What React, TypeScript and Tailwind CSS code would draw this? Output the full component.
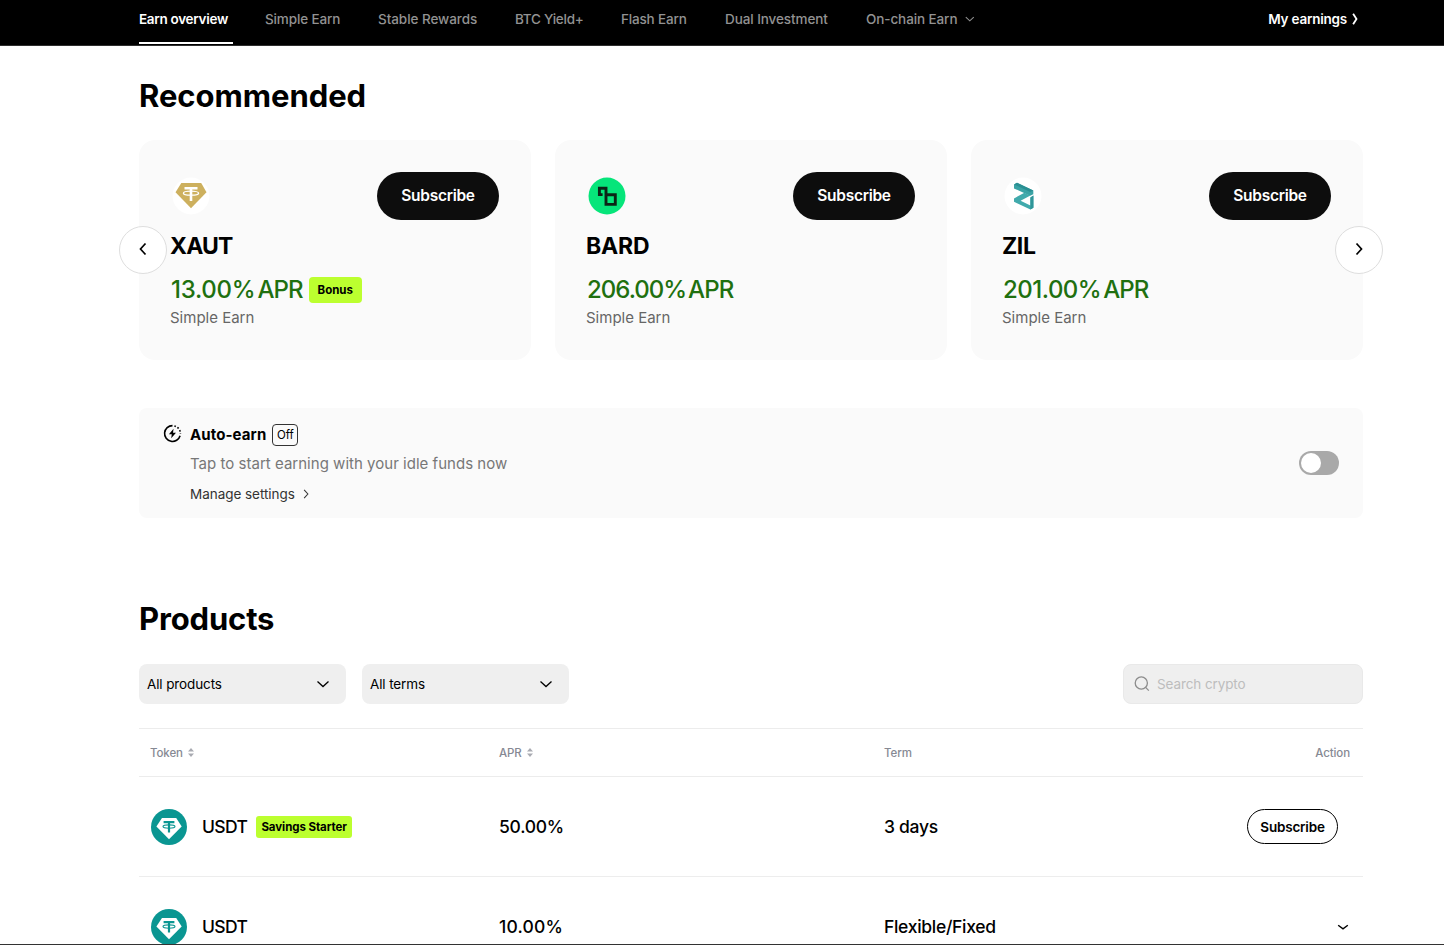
import { FunctionComponent, ReactNode } from "react";

interface NavItem {
  label: string;
  width: string;
  active?: boolean;
  dropdown?: boolean;
}

interface CardProps {
  name: string;
  apr: string;
  icon: ReactNode;
  nameClass: string;
  aprClass: string;
  bonus?: boolean;
}

interface RowProps {
  apr: string;
  aprClass: string;
  term: string;
  tag?: string;
  children: ReactNode;
}

const navItems: NavItem[] = [
  { label: "Earn overview", width: "w-[94px] tracking-[-0.3px]", active: true },
  { label: "Simple Earn", width: "w-[75px] tracking-[-0.13px]" },
  { label: "Stable Rewards", width: "w-[99px] tracking-[-0.06px]" },
  { label: "BTC Yield+", width: "w-[68px] tracking-[-0.27px]" },
  { label: "Flash Earn", width: "w-[66px] tracking-[-0.17px]" },
  { label: "Dual Investment", width: "w-[103px] tracking-[-0.08px]" },
  { label: "On-chain Earn", width: "w-[110px] tracking-[-0.1px]", dropdown: true },
];

const Chevron: FunctionComponent<{ d: string; className: string; stroke?: number }> = ({
  d,
  className,
  stroke = 1.5,
}) => (
  <svg className={className} viewBox="0 0 16 16" fill="none" stroke="currentColor" strokeWidth={stroke}>
    <path d={d} />
  </svg>
);

const DOWN = "M2.5 5.5 8 10.5l5.5-5";
const RIGHT = "M5.5 2.5 10.5 8l-5 5.5";
const LEFT = "M10.5 2.5 5.5 8l5 5.5";

const XautIcon = () => (
  <svg className="size-10" viewBox="0 0 40 40">
    <circle cx="20" cy="20" r="18.5" fill="#fff" />
    <path d="M10.3 7h19.9l5.3 9.2L20 32.2 4.5 16.2z" fill="#cdb05e" />
    <path d="M13.5 12.2h13M20 12v13" stroke="#fff" strokeWidth="2.6" fill="none" />
    <ellipse cx="20" cy="17.2" rx="7.6" ry="2" fill="none" stroke="#fff" strokeWidth="1.3" />
  </svg>
);

const BardIcon = () => (
  <svg className="size-10" viewBox="0 0 40 40">
    <circle cx="20" cy="20" r="18.5" fill="#06e57a" />
    <path
      d="M15.6 18.6h-3.2v-6.4h6.6v16.2h9.3v-9.6h-8"
      fill="none"
      stroke="#0c2416"
      strokeWidth="2.9"
    />
  </svg>
);

const ZilIcon = () => (
  <svg className="size-10" viewBox="0 0 40 40">
    <circle cx="20" cy="20" r="18.5" fill="#fff" />
    <path d="M11 8.4 14 6.8l16.3 7.6v3.8l-3.2 1.6L11 12.4z" fill="#3aa3a5" />
    <path d="M11 8.4 14 6.8l16.3 7.6-3.1 1.6z" fill="#2a8f93" />
    <path d="M21.4 16.8 27.4 19.4 17.6 24.8l9.8 4.6V21.6l3-2v12.2l-3 1.7L11 25.8v-3.4z" fill="#41aaac" />
    <path d="m27.4 21.6 3-2v12.2l-3 1.7z" fill="#2f9699" />
  </svg>
);

const UsdtIcon = () => (
  <svg className="size-9 shrink-0" viewBox="0 0 36 36">
    <circle cx="18" cy="18" r="18" fill="#0a9692" />
    <path d="M11 9h14.2l5.5 8.6L18 30.2 5.4 17.6z" fill="#fff" />
    <path d="M12.6 13.2h10.8M18 13v10.6" stroke="#0a9692" strokeWidth="2.2" fill="none" />
    <ellipse cx="18" cy="17.6" rx="6" ry="1.7" fill="none" stroke="#0a9692" strokeWidth="1.1" />
  </svg>
);

const SortIcon = () => (
  <svg className="ml-[5px] h-[9px] w-[6px]" viewBox="0 0 6 9" fill="#a9abb2">
    <path d="M3 0 6 3.4H0zM3 9 6 5.6H0z" />
  </svg>
);

const AutoEarnIcon = () => (
  <svg className="size-[19px]" viewBox="0 0 18 18" fill="none" stroke="#000" strokeWidth="1.5">
    <path d="M9 1.5a7.5 7.5 0 1 0 7.2 9.6" />
    <path d="M10.8 1.8a7.5 7.5 0 0 1 5.7 7.6" strokeDasharray="1.5 1.7" />
    <path d="M10 4.4 5.6 9.8h2.7l-.5 3.8 4.5-5.4H9.5z" fill="#000" stroke="none" />
  </svg>
);

const Header = () => (
  <header className="h-[46px] shrink-0 border-b border-[#2e2e2e] bg-black text-[13.5px] font-medium">
    <div className="ml-[139px] flex w-[1224px]">
      <nav className="flex gap-[38px]">
        {navItems.map((item) => (
          <div
            key={item.label}
            className={`flex h-11 shrink-0 items-start whitespace-nowrap pt-[9px] leading-5 first:mr-[-6px] first:border-b-2 ${
              item.width
            } ${item.active ? "border-white font-semibold text-white" : "text-[#929292]"}`}
          >
            <span>{item.label}</span>
            {item.dropdown && <Chevron d={DOWN} className="ml-[7px] mt-1 size-3" />}
          </div>
        ))}
      </nav>
      <div className="ml-auto mr-[2px] flex pt-[9px] font-semibold leading-5 tracking-[-0.22px] text-white">
        My earnings
        <Chevron d="M5.5 1 10 8l-4.5 7" className="ml-[2px] mt-1 size-3" stroke={2.4} />
      </div>
    </div>
  </header>
);

const RecommendCard: FunctionComponent<CardProps> = (props) => {
  const { name, apr, icon, nameClass, aprClass, bonus } = props;
  return (
    <div className="h-[220px] w-[392px] rounded-2xl bg-[#fafafa] px-8 pt-8">
      <div className="flex h-12 items-center justify-between">
        {icon}
        <button className="h-12 w-[122px] rounded-full bg-[#0d0d0d] pb-px text-[15.5px] font-semibold tracking-[-0.3px] text-white">
          Subscribe
        </button>
      </div>
      <div className={`-ml-px mt-[10px] whitespace-nowrap text-[23px] font-bold leading-8 ${nameClass}`}>
        {name}
      </div>
      <div className="mt-3 flex items-center whitespace-nowrap text-2xl font-medium leading-8 text-[#20700f]">
        <span className={aprClass}>{apr}</span>
        <span className="ml-[2px] tracking-[-0.9px]">APR</span>
        {bonus && (
          <span className="ml-[6px] flex h-[26px] w-[53px] items-center justify-center rounded-[4px] bg-[#bcff2f] text-[11.5px] font-bold tracking-[-0.05px] text-black">
            Bonus
          </span>
        )}
      </div>
      <div className="-ml-px text-[15px] leading-6 text-[#666]">Simple Earn</div>
    </div>
  );
};

const Select: FunctionComponent<{ label: string }> = ({ label }) => (
  <div className="flex h-10 w-[207px] items-center justify-between rounded-lg bg-[#efefef] pl-2 pr-[15px] text-[13.5px] tracking-[-0.12px] text-black">
    {label}
    <Chevron d={DOWN} className="size-4" stroke={1.3} />
  </div>
);

const columns = "grid grid-cols-[349px_384px_1fr_auto] items-center pl-3";

const ProductRow: FunctionComponent<RowProps> = ({ apr, aprClass, term, tag, children }) => (
  <div className={`${columns} h-[100px] border-b border-[#ededed] text-[17.5px] font-medium`}>
    <div className="flex items-center">
      <UsdtIcon />
      <span className="ml-[15px] mr-px pt-[2px] tracking-[-0.65px]">USDT</span>
      {tag && (
        <span className="ml-2 flex h-[22px] w-24 items-center justify-center whitespace-nowrap rounded-[3px] bg-[#bcff2f] pt-[2px] text-[11.5px] font-bold tracking-[-0.07px]">
          {tag}
        </span>
      )}
    </div>
    <div className={`-ml-px pt-[2px] ${aprClass}`}>{apr}</div>
    <div className="pt-[2px] tracking-[-0.3px]">{term}</div>
    <div className="flex items-center">{children}</div>
  </div>
);

const App = () => {
  return (
    <div className="flex h-[945px] w-full flex-col overflow-hidden border-b border-[#333] bg-white font-['Inter',sans-serif] text-black">
      <Header />
      <main className="ml-[139px] w-[1224px] shrink-0">
        <h1 className="mt-[30px] text-[31px] font-bold leading-10 tracking-[-0.05px]">Recommended</h1>
        <section className="relative mt-6 flex gap-6">
          <RecommendCard
            name="XAUT"
            apr="13.00%"
            icon={<XautIcon />}
            nameClass="tracking-[-0.85px]"
            aprClass="tracking-[-0.25px]"
            bonus
          />
          <RecommendCard
            name="BARD"
            apr="206.00%"
            icon={<BardIcon />}
            nameClass="tracking-[-0.2px]"
            aprClass="tracking-[-1px]"
          />
          <RecommendCard
            name="ZIL"
            apr="201.00%"
            icon={<ZilIcon />}
            nameClass="tracking-[-0.4px]"
            aprClass="tracking-[-0.5px]"
          />
          <button className="absolute left-[-20px] top-[86px] flex size-12 items-center justify-center rounded-full border border-[#dedede] bg-white pb-[2px]">
            <Chevron d={LEFT} className="size-4" stroke={1.7} />
          </button>
          <button className="absolute right-[-20px] top-[86px] flex size-12 items-center justify-center rounded-full border border-[#dedede] bg-white pb-[2px]">
            <Chevron d={RIGHT} className="size-4" stroke={1.7} />
          </button>
        </section>

        <section className="mt-12 flex h-[110px] items-center rounded-lg bg-[#fafafa] pl-6 pr-6">
          <div className="mr-2 h-full pt-4">
            <AutoEarnIcon />
          </div>
          <div className="h-full pt-[15px]">
            <div className="flex h-6 items-center">
              <span className="text-[15px] font-bold tracking-[0.1px]">Auto-earn</span>
              <span className="ml-[6px] flex h-[22px] w-[26px] items-center justify-center rounded-[4px] border border-[#333] pt-px text-[11.5px]">
                Off
              </span>
            </div>
            <div className="mt-[5px] text-[15px] leading-6 tracking-[0.02px] text-[#777]">
              Tap to start earning with your idle funds now
            </div>
            <div className="mt-2 flex items-center text-[13.5px] leading-5 tracking-[-0.04px] text-[#333]">
              Manage settings
              <Chevron d={RIGHT} className="ml-[5px] size-3" stroke={1.4} />
            </div>
          </div>
          <div className="ml-auto flex h-6 w-10 items-center rounded-full bg-[#a9a9a9] pl-[2px]">
            <div className="size-5 rounded-full bg-white" />
          </div>
        </section>

        <h2 className="mt-[81px] text-[31px] font-bold leading-10 tracking-[-0.15px]">Products</h2>
        <div className="mt-[25px] flex">
          <Select label="All products" />
          <div className="w-4" />
          <Select label="All terms" />
          <div className="ml-auto flex h-10 w-60 items-center rounded-lg border border-[#e9e9e9] bg-[#efefef] pl-[10px] text-[13.5px] text-[#bdbdbd]">
            <svg className="mr-[7px] size-4" viewBox="0 0 16 16" fill="none" stroke="#8c8c8c" strokeWidth="1.3">
              <circle cx="7.3" cy="7" r="6.1" />
              <path d="m11.6 11.4 3.2 3.2" />
            </svg>
            <span className="tracking-[-0.1px]">Search crypto</span>
          </div>
        </div>

        <section className="mt-6">
          <div
            className={`${columns} h-[49px] border-y border-[#ececec] text-[11.5px] font-medium tracking-[-0.1px] text-[#868993]`}
          >
            <div className="-ml-px flex items-center">
              <span className="pt-[2px]">Token</span>
              <SortIcon />
            </div>
            <div className="-ml-px flex items-center">
              <span className="pt-[2px]">APR</span>
              <SortIcon />
            </div>
            <div className="pt-[2px]">Term</div>
            <div className="pr-[13px] pt-[2px]">Action</div>
          </div>
          <ProductRow apr="50.00%" aprClass="tracking-[-0.25px]" term="3 days" tag="Savings Starter">
            <button className="mr-[25px] h-[35px] w-[91px] rounded-full border border-black pt-px text-[13.5px] font-semibold tracking-[-0.2px]">
              Subscribe
            </button>
          </ProductRow>
          <ProductRow apr="10.00%" aprClass="tracking-[0.2px]" term="Flexible/Fixed">
            <Chevron d="M2.5 6 8 10l5.5-4" className="mr-[13px] size-[14px]" stroke={1.7} />
          </ProductRow>
        </section>
      </main>
    </div>
  );
};

export default App;
